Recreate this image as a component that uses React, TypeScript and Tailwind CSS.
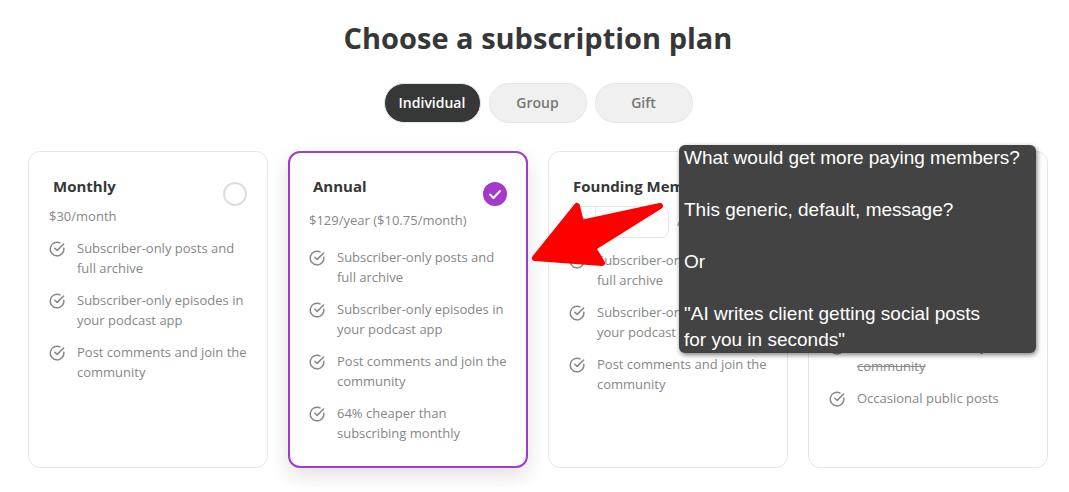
import {useState} from 'react';

type Feature = { text: string; off?: boolean };

const posts = 'Subscriber-only posts and full archive';
const episodes = 'Subscriber-only episodes in your podcast app';
const comments = 'Post comments and join the community';

const tabs = ['Individual', 'Group', 'Gift'];

const CheckCircle = () => (
    <svg viewBox="0 0 16 16" className="mt-[3px] size-4 shrink-0" fill="none" stroke="#868787" strokeWidth="1.5" strokeLinecap="round" strokeLinejoin="round">
        <path d="M14.8 7.2A6.8 6.8 0 1 1 10.9 1.9"/>
        <path d="M5.8 7.2L8.2 9.4L14.6 3"/>
    </svg>
);

const Features = ({items}: { items: Feature[] }) => (
    <ul className="flex flex-col gap-3">
        {items.map(item => (
            <li key={item.text} className="flex gap-3 leading-5">
                <CheckCircle/>
                <span className={item.off ? 'line-through' : ''}>{item.text}</span>
            </li>
        ))}
    </ul>
);

type PlanProps = {
    id: string;
    title: string;
    selected: string;
    onSelect: (id: string) => void;
    children: React.ReactNode;
};

const Plan = ({id, title, selected, onSelect, children}: PlanProps) => {
    const active = selected === id;

    return (
        <section
            className={`min-w-0 flex-1 rounded-xl bg-white ${active
                ? 'border-2 border-[#a33acb] px-[19px] py-[23px] shadow-[0_8px_20px_rgba(0,0,0,0.12)]'
                : 'border border-[#e6e6e6] px-5 py-6'}`}
        >
            <label className="flex h-[30px] justify-between pl-1">
                <span className="text-[15px] leading-5 font-bold whitespace-nowrap text-[#363737]">{title}</span>
                <span className="grid h-[30px] w-6 shrink-0 items-end">
                    <input
                        type="radio"
                        name="plan"
                        checked={active}
                        onChange={() => onSelect(id)}
                        className="peer col-start-1 row-start-1 size-6 appearance-none rounded-full border-2 border-[#dddddd] bg-white checked:border-[#a33acb] checked:bg-[#a33acb]"
                    />
                    <svg viewBox="0 0 24 24" className="pointer-events-none invisible z-10 col-start-1 row-start-1 size-6 peer-checked:visible" fill="none" stroke="#fff" strokeWidth="2" strokeLinecap="round" strokeLinejoin="round">
                        <path d="M7 12.5L10.5 16L17 9"/>
                    </svg>
                </span>
            </label>
            {children}
        </section>
    );
};

const Arrow = () => (
    <svg viewBox="0 0 134 66" className="absolute top-[202px] left-[531px] h-[66px] w-[134px]" fill="#ff0000" stroke="#ff0000" strokeWidth="6" strokeLinejoin="round">
        <path d="M4 56L46 4L50 21L129 4L62 46L71 61Z"/>
    </svg>
);

export default function App() {
    const [tab, setTab] = useState('Individual');
    const [plan, setPlan] = useState('annual');

    return (
        <main className="relative bg-white pt-5 pr-[21px] pb-6 pl-7 font-['Open_Sans','Noto_Sans',sans-serif] text-[13px] text-[#868787]">
            <h1 className="text-center text-[29px] leading-9 font-bold text-[#363737]">Choose a subscription plan</h1>

            <div className="mt-[27px] flex justify-center gap-2">
                {tabs.map(name => (
                    <button
                        key={name}
                        onClick={() => setTab(name)}
                        className={`h-10 rounded-full border border-[#e6e6e6] text-sm font-semibold ${name === tab
                            ? 'w-[97px] bg-[#363737] text-white'
                            : 'w-[98px] bg-[#f0f0f0] text-[#777777]'}`}
                    >
                        {name}
                    </button>
                ))}
            </div>

            <div className="mt-7 flex min-h-[317px] gap-5">
                <Plan id="monthly" title="Monthly" selected={plan} onSelect={setPlan}>
                    <p className="mb-3 leading-5">$30/month</p>
                    <Features items={[{text: posts}, {text: episodes}, {text: comments}]}/>
                </Plan>

                <Plan id="annual" title="Annual" selected={plan} onSelect={setPlan}>
                    <p className="mb-[13px] py-1 leading-5">$129/year ($10.75/month)</p>
                    <Features items={[{text: posts}, {text: episodes}, {text: comments}, {text: '64% cheaper than subscribing monthly'}]}/>
                </Plan>

                <Plan id="founding" title="Founding Member" selected={plan} onSelect={setPlan}>
                    <div className="mb-3 flex items-center gap-2">
                        <label className="flex h-8 w-[100px] items-center rounded-lg border border-[#e6e6e6]">
                            <span className="w-[26px] shrink-0 border-r border-[#e6e6e6] text-center leading-[30px]">$</span>
                            <input aria-label="Amount per year" className="w-full min-w-0 px-2 outline-none"/>
                        </label>
                        <span>/year</span>
                    </div>
                    <Features items={[{text: posts}, {text: episodes}, {text: comments}]}/>
                </Plan>

                <Plan id="none" title="None" selected={plan} onSelect={setPlan}>
                    <div className="mt-[26px]">
                        <Features items={[{text: posts, off: true}, {text: episodes, off: true}, {text: comments, off: true}, {text: 'Occasional public posts'}]}/>
                    </div>
                </Plan>
            </div>

            <Arrow/>

            <div className="absolute top-[145px] left-[679px] h-[208px] w-[357px] rounded-md bg-[#434343] px-[5px] font-['Liberation_Sans',Arial,sans-serif] text-[19px] leading-[26px] text-white shadow-[1px_2px_5px_rgba(0,0,0,0.5)]">
                <p className="mb-[26px]">What would get more paying members?</p>
                <p className="mb-[26px]">This generic, default, message?</p>
                <p className="mb-[26px]">Or</p>
                <p>"AI writes client getting social posts<br/>for you in seconds"</p>
            </div>
        </main>
    );
}
